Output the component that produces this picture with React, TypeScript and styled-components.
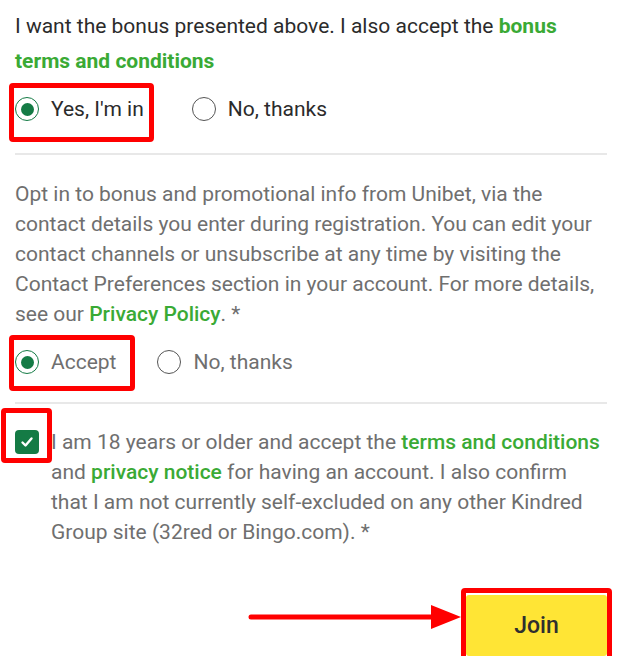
import styled, { createGlobalStyle } from "styled-components";

const GlobalStyle = createGlobalStyle`
  body {
    margin: 0;
    background: #fff;
    font-family: Roboto, "Liberation Sans", Arial, sans-serif;
  }
`;

const green = "#147b45";
const link = "#3aaa35";

const Page = styled.div`
  width: 592px;
  padding: 9px 36px 0 15px;
  font-size: 21px;
`;

const Intro = styled.p`
  margin: 0;
  line-height: 35px;
  color: #2b2b2b;
`;

const Text = styled.p`
  margin: 0;
  line-height: 30px;
  color: #6f6f6f;
`;

const Link = styled.a<{ $weight?: number }>`
  color: ${link};
  font-weight: ${(p) => p.$weight ?? 500};
  text-decoration: none;
`;

const RadioRow = styled.div<{
  $top: number;
  $bottom: number;
  $gap: number;
  $dark?: boolean;
}>`
  display: flex;
  align-items: center;
  gap: ${(p) => p.$gap}px;
  margin: ${(p) => `${p.$top}px 0 ${p.$bottom}px`};
  color: ${(p) => (p.$dark ? "#2b2b2b" : "#6f6f6f")};
`;

const Option = styled.label`
  display: flex;
  align-items: center;
  gap: 12px;
  height: 24px;
  line-height: 24px;
`;

const Radio = styled.span<{ $checked?: boolean }>`
  box-sizing: border-box;
  width: 24px;
  height: 24px;
  border-radius: 50%;
  display: grid;
  place-content: center;
  border: ${(p) => (p.$checked ? `1px solid ${green}` : "1.5px solid #555")};

  &::after {
    content: "";
    width: 13px;
    height: 13px;
    border-radius: 50%;
    background: ${(p) => (p.$checked ? green : "transparent")};
  }
`;

const Highlight = styled.div<{ $t: number; $r: number; $b: number; $l: number }>`
  position: relative;

  &::after {
    content: "";
    position: absolute;
    top: ${(p) => -p.$t}px;
    right: ${(p) => -p.$r}px;
    bottom: ${(p) => -p.$b}px;
    left: ${(p) => -p.$l}px;
    border: 5px solid #ff0000;
    border-radius: 4px;
    pointer-events: none;
  }
`;

const Divider = styled.hr<{ $bottom: number }>`
  border: 0;
  border-top: 2px solid #e8e8e8;
  margin: 0 0 ${(p) => p.$bottom}px;
`;

const CheckRow = styled.div`
  display: flex;
  align-items: flex-start;
  gap: 12px;
`;

const CheckBox = styled.span`
  flex: none;
  width: 24px;
  height: 24px;
  margin-top: 3px;
  border-radius: 4px;
  background: ${green};
  display: grid;
  place-content: center;
`;

const ButtonRow = styled.div`
  display: flex;
  justify-content: flex-end;
  align-items: center;
  gap: 5px;
  margin-top: 48px;
`;

const JoinButton = styled.button`
  width: 141px;
  height: 61px;
  border: 0;
  border-radius: 3px;
  background: #ffe535;
  color: #2f2f2f;
  font-family: Roboto, "Liberation Sans", Arial, sans-serif;
  font-size: 23px;
  font-weight: 500;
  cursor: pointer;
`;

export default function App() {
  return (
    <>
      <GlobalStyle />
      <Page>
        <Intro>
          I want the bonus presented above. I also accept the{" "}
          <Link $weight={700}>bonus terms and conditions</Link>
        </Intro>
        <RadioRow $top={18} $bottom={32} $gap={48} $dark>
          <Highlight $t={14} $r={10} $b={21} $l={6}>
            <Option>
              <Radio $checked />
              Yes, I'm in
            </Option>
          </Highlight>
          <Option>
            <Radio />
            No, thanks
          </Option>
        </RadioRow>
        <Divider $bottom={24} />
        <Text>
          Opt in to bonus and promotional info from Unibet, via the contact
          details you enter during registration. You can edit your contact
          channels or unsubscribe at any time by visiting the Contact
          Preferences section in your account. For more details, see our{" "}
          <Link>Privacy Policy</Link>. *
        </Text>
        <RadioRow $top={21} $bottom={28} $gap={41}>
          <Highlight $t={15} $r={19} $b={17} $l={6}>
            <Option>
              <Radio $checked />
              Accept
            </Option>
          </Highlight>
          <Option>
            <Radio />
            No, thanks
          </Option>
        </RadioRow>
        <Divider $bottom={23} />
        <CheckRow>
          <Highlight $t={19} $r={13} $b={9} $l={14}>
            <CheckBox>
              <svg width="14" height="14" viewBox="0 0 14 14">
                <path
                  d="M2.5 7.5 L5.5 10.5 L11.5 3.5"
                  fill="none"
                  stroke="#fff"
                  strokeWidth="2.4"
                  strokeLinecap="round"
                  strokeLinejoin="round"
                />
              </svg>
            </CheckBox>
          </Highlight>
          <Text>
            I am 18 years or older and accept the{" "}
            <Link>terms and conditions</Link> and <Link>privacy notice</Link>{" "}
            for having an account. I also confirm that I am not currently
            self-excluded on any other Kindred Group site (32red or Bingo.com).
            *
          </Text>
        </CheckRow>
        <ButtonRow>
          <svg width="213" height="61" viewBox="0 0 213 61">
            <line
              x1="3"
              y1="22"
              x2="188"
              y2="22"
              stroke="#ff0000"
              strokeWidth="5"
              strokeLinecap="round"
            />
            <polygon points="183,10 213,22 183,34" fill="#ff0000" />
          </svg>
          <Highlight $t={7} $r={5} $b={6} $l={5}>
            <JoinButton>Join</JoinButton>
          </Highlight>
        </ButtonRow>
      </Page>
    </>
  );
}
